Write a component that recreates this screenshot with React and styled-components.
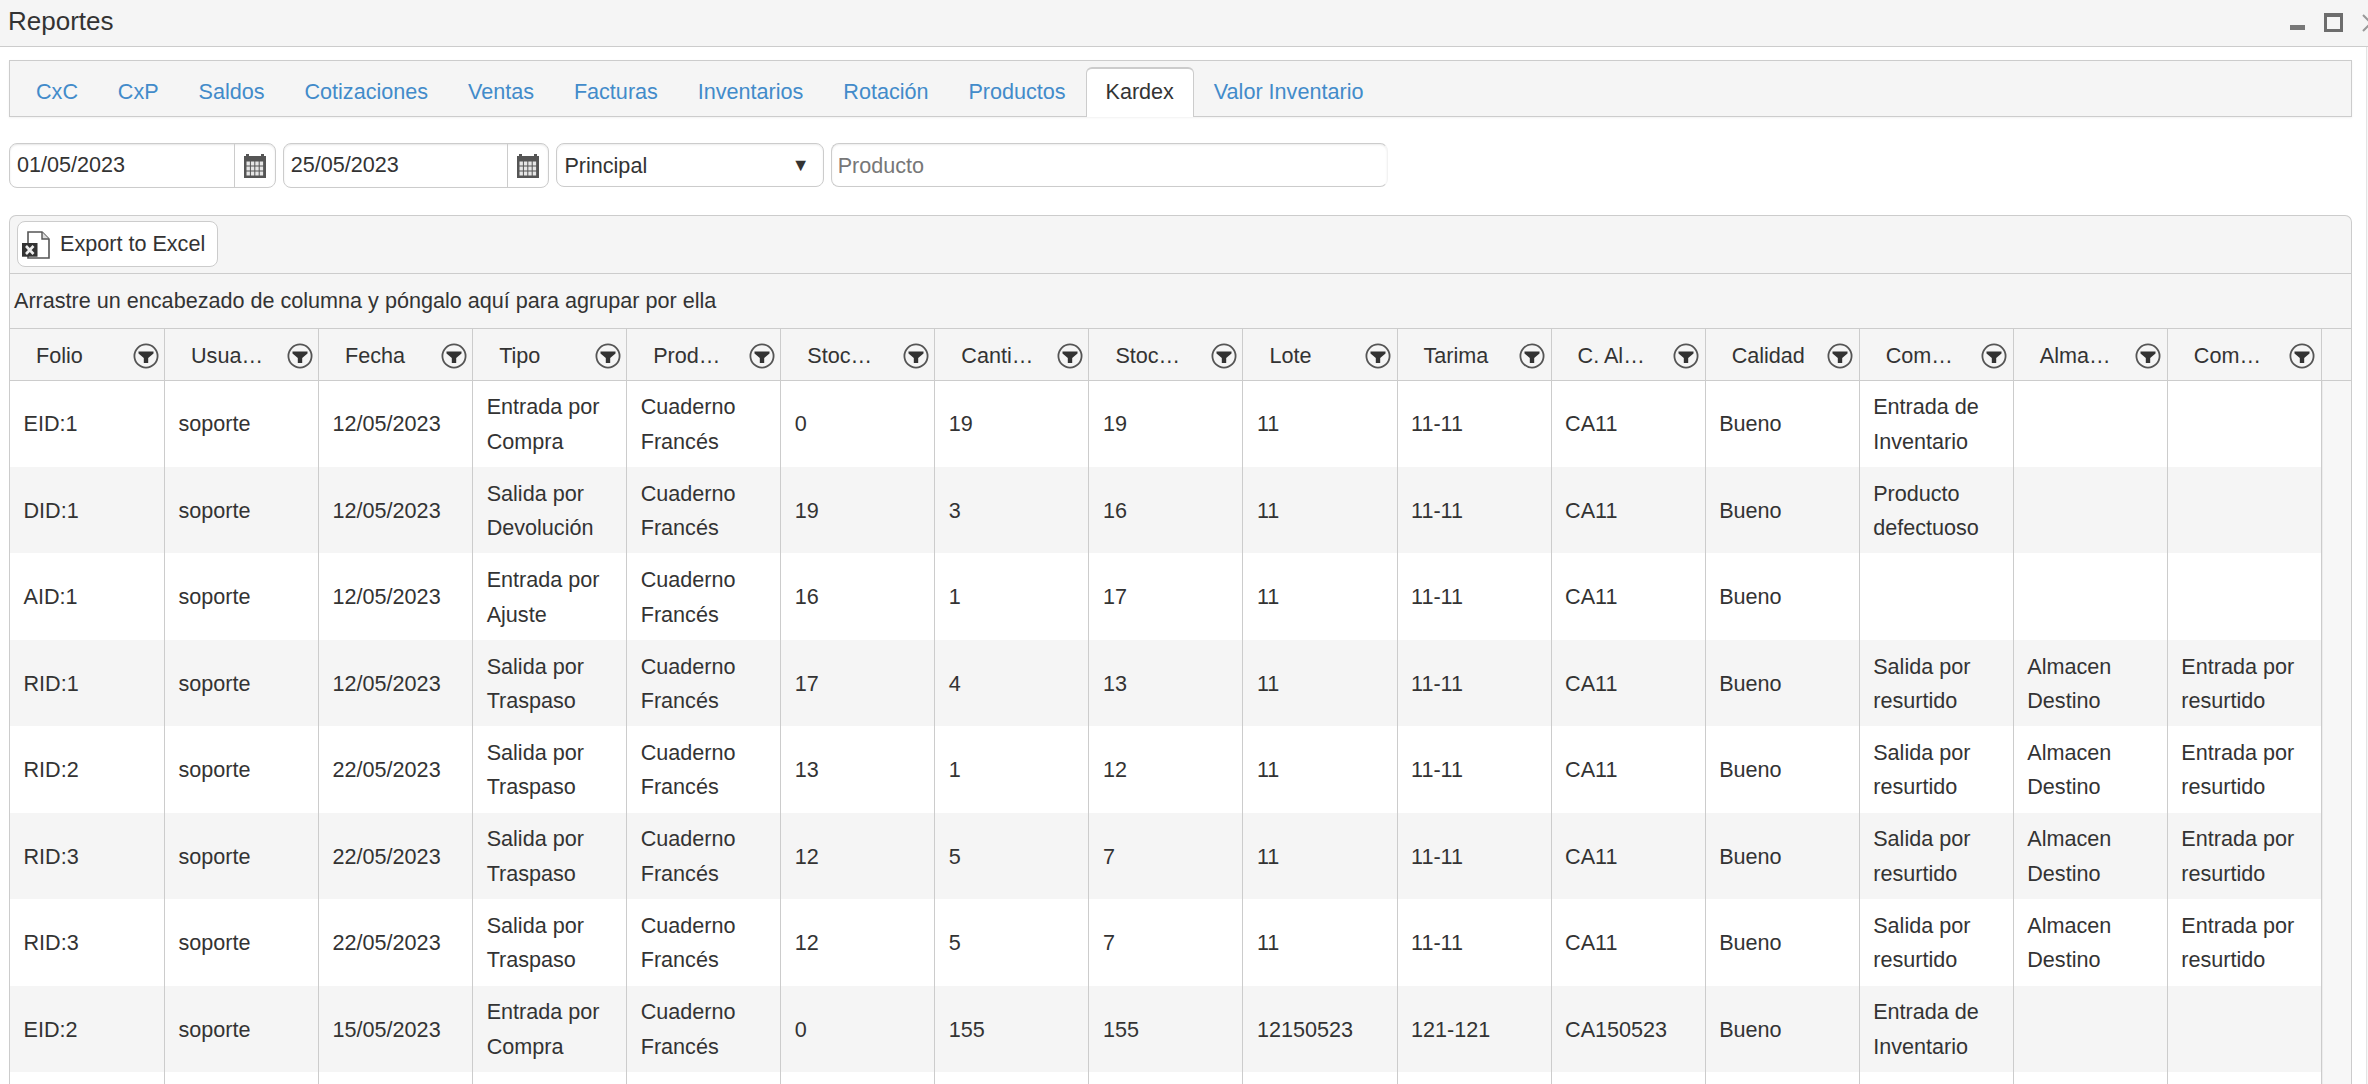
import React from "react";
import styled, { createGlobalStyle } from "styled-components";

const Global = createGlobalStyle`
  html, body { margin: 0; padding: 0; background: #fff; overflow: hidden; }
  body { font-family: "Liberation Sans", Arial, sans-serif; color: #333; }
  * { box-sizing: border-box; }
`;

const Page = styled.div`
  width: 2368px;
  height: 1084px;
  overflow: hidden;
  display: flex;
  flex-direction: column;
`;
const TitleBar = styled.header`
  height: 47px;
  flex: none;
  background: #f5f5f5;
  border-bottom: 1px solid #ccc;
  display: flex;
  align-items: center;
  padding-left: 8px;
`;
const Title = styled.h1`
  margin: 0 0 3px;
  flex: 1;
  font-size: 26px;
  font-weight: 400;
  color: #333;
`;
const WindowControls = styled.div`
  display: flex;
  align-items: flex-start;
  width: 78px;
  height: 46px;
  flex: none;
  overflow: hidden;
`;
const MinimizeIcon = styled.span`
  width: 15px;
  height: 5px;
  flex: none;
  margin-top: 25px;
  background: #777;
`;
const MaximizeIcon = styled.span`
  width: 19px;
  height: 19px;
  flex: none;
  margin: 13px 0 0 19px;
  border: 3.5px solid #6d6d6d;
  border-top-width: 4px;
`;
const CloseIcon = styled.svg`
  width: 14px;
  height: 18px;
  margin: 14px 0 0 19px;
  flex: none;
`;
const Body = styled.div`
  flex: 1;
  min-height: 0;
  display: flex;
`;
const Content = styled.main`
  width: 2367px;
  flex: none;
  padding: 13px 14px 0 9px;
  border-right: 1px solid #e4e4e4;
  display: flex;
  flex-direction: column;
`;
const Rest = styled.div`
  flex: 1;
  background: #f7f7f7;
`;
const TabBar = styled.nav`
  height: 57px;
  flex: none;
  background: #f5f5f5;
  border: 1px solid #ccc;
  box-shadow: 0 1px 2px rgba(0, 0, 0, 0.06);
  display: flex;
  align-items: stretch;
  padding: 6px 0 0 6.05px;
`;
const Tab = styled.a`
  display: flex;
  align-items: center;
  padding: 0 18.95px 2px;
  font-size: 21.6px;
  color: ${(p) => (p.$active ? "#333" : "#428bca")};
  background: ${(p) => (p.$active ? "#fff" : "transparent")};
  border: 1px solid ${(p) => (p.$active ? "#ccc" : "transparent")};
  border-top-width: ${(p) => (p.$active ? "2px" : "1px")};
  border-bottom: 0;
  border-radius: 6px 6px 0 0;
  margin-bottom: -1px;
`;
const Filters = styled.div`
  display: flex;
  align-items: flex-start;
  gap: 7px;
  margin-top: 26px;
  height: 45px;
  flex: none;
`;
const DateGroup = styled.div`
  width: 266.7px;
  height: 45px;
  display: flex;
  border: 1px solid #ccc;
  border-radius: 8px;
  background: #fff;
  box-shadow: inset 0 1px 2px rgba(0, 0, 0, 0.1);
`;
const DateInput = styled.input`
  flex: 1;
  min-width: 0;
  border: 0;
  background: transparent;
  outline: none;
  padding: 0 0 1px 7px;
  font: 400 21.6px "Liberation Sans", Arial, sans-serif;
  color: #333;
`;
const DateAddon = styled.span`
  width: 41px;
  flex: none;
  border-left: 1px solid #ccc;
  display: flex;
  align-items: center;
  justify-content: center;
`;
const SelectBox = styled.div`
  width: 267.3px;
  height: 44px;
  border: 1px solid #ccc;
  border-radius: 8px;
  box-shadow: inset 0 1px 2px rgba(0, 0, 0, 0.08);
  display: flex;
  align-items: center;
  justify-content: space-between;
  padding: 1px 13px 0 7px;
  font-size: 21.6px;
  color: #333;
`;
const SelectArrow = styled.span`
  font-size: 18px;
  color: #333;
`;
const ProductInput = styled.input`
  width: 557.3px;
  height: 44px;
  border: 1px solid #ccc;
  border-right-color: #f2f2f2;
  border-radius: 8px;
  box-shadow: inset 0 1px 2px rgba(0, 0, 0, 0.08);
  outline: none;
  padding: 1px 6px 0;
  font: 400 21.6px "Liberation Sans", Arial, sans-serif;
  color: #333;
  &::placeholder { color: #777; opacity: 1; }
`;
const GridPanel = styled.section`
  margin-top: 27px;
  flex: 1;
  min-height: 0;
  overflow: hidden;
  border: 1px solid #ccc;
  border-bottom: 0;
  border-radius: 7px 7px 0 0;
  background: #f5f5f5;
  display: flex;
  flex-direction: column;
`;
const Toolbar = styled.div`
  height: 58px;
  flex: none;
  padding: 5px 7px 0;
  border-bottom: 1px solid #ccc;
`;
const ExportButton = styled.button`
  width: 201px;
  height: 46px;
  background: #fff;
  border: 1px solid #ccc;
  border-radius: 8px;
  display: flex;
  align-items: center;
  padding: 0 0 0 4px;
  gap: 8px;
  font: 400 21.6px "Liberation Sans", Arial, sans-serif;
  color: #333;
`;
const GroupHint = styled.div`
  height: 55px;
  flex: none;
  border-bottom: 1px solid #ccc;
  display: flex;
  align-items: center;
  padding: 0 0 0 4px;
  font-size: 21.6px;
  color: #333;
`;
const columns = "155px repeat(14, 154.07px) 1fr";
const HeaderRow = styled.div`
  height: 51.5px;
  flex: none;
  display: grid;
  grid-template-columns: ${columns};
  border-bottom: 1px solid #ccc;
`;
const HeaderCell = styled.div`
  display: flex;
  align-items: center;
  justify-content: space-between;
  padding: 3px 5.5px 0 26px;
  border-right: 1px solid #ccc;
  font-size: 21.6px;
  white-space: nowrap;
  color: #333;
`;
const HeaderFill = styled.div``;
const Rows = styled.div`
  flex: 1;
  min-height: 0;
  overflow: hidden;
`;
const Row = styled.div`
  height: 86.45px;
  display: grid;
  grid-template-columns: ${columns};
`;
const Cell = styled.div`
  display: flex;
  align-items: center;
  padding: 2px 12.5px 0 13.5px;
  border-right: 1px solid #ccc;
  background: ${(p) => (p.$alt ? "#f5f5f5" : "#fff")};
  font-size: 21.6px;
  line-height: 34.5px;
  color: #333;
`;
const ScrollTrack = styled.div`
  background: #f7f7f7;
  border-left: 1px solid #ececec;
`;

const CalendarIcon = () => (
  <svg width="22" height="24" viewBox="0 0 22 24">
    <rect x="0" y="2" width="22" height="22" fill="#555" />
    <rect x="2" y="0" width="3" height="4" fill="#555" />
    <rect x="17" y="0" width="3" height="4" fill="#555" />
    {[0, 1, 2].map((r) =>
      [0, 1, 2, 3].map((c) => (
        <rect key={`${r}-${c}`} x={2.5 + c * 4.4} y={7.5 + r * 5} width="3.4" height="4" fill="#e6e6e6" />
      ))
    )}
  </svg>
);
const ExcelIcon = () => (
  <svg width="30" height="30" viewBox="0 0 30 30">
    <path d="M6 14V3H20L27 10V29H6V27" fill="none" stroke="#555" strokeWidth="1.6" />
    <path d="M20 3V10H27" fill="#ddd" stroke="#555" strokeWidth="1.4" />
    <rect x="0" y="14" width="15.5" height="13.7" fill="#333" />
    <path d="M4 17L11.5 25M11.5 17L4 25" stroke="#eee" strokeWidth="2.6" />
  </svg>
);
const FilterIcon = () => (
  <svg width="26" height="26" viewBox="0 0 26 26" style={{ flex: "none" }}>
    <circle cx="13" cy="13" r="11.6" fill="none" stroke="#555" strokeWidth="1.8" />
    <path d="M5.5 8.5H20.5V10.5L15.2 15V20H10.8V15L5.5 10.5Z" fill="#333" />
  </svg>
);

const tabs = ["CxC", "CxP", "Saldos", "Cotizaciones", "Ventas", "Facturas", "Inventarios", "Rotación", "Productos", "Kardex", "Valor Inventario"];
const headers = ["Folio", "Usua…", "Fecha", "Tipo", "Prod…", "Stoc…", "Canti…", "Stoc…", "Lote", "Tarima", "C. Al…", "Calidad", "Com…", "Alma…", "Com…"];
const P = "Cuaderno Francés";
const res = ["Salida por resurtido", "Almacen Destino", "Entrada por resurtido"];
const data = [
  ["EID:1", "soporte", "12/05/2023", "Entrada por Compra", P, "0", "19", "19", "11", "11-11", "CA11", "Bueno", "Entrada de Inventario", "", ""],
  ["DID:1", "soporte", "12/05/2023", "Salida por Devolución", P, "19", "3", "16", "11", "11-11", "CA11", "Bueno", "Producto defectuoso", "", ""],
  ["AID:1", "soporte", "12/05/2023", "Entrada por Ajuste", P, "16", "1", "17", "11", "11-11", "CA11", "Bueno", "", "", ""],
  ["RID:1", "soporte", "12/05/2023", "Salida por Traspaso", P, "17", "4", "13", "11", "11-11", "CA11", "Bueno", ...res],
  ["RID:2", "soporte", "22/05/2023", "Salida por Traspaso", P, "13", "1", "12", "11", "11-11", "CA11", "Bueno", ...res],
  ["RID:3", "soporte", "22/05/2023", "Salida por Traspaso", P, "12", "5", "7", "11", "11-11", "CA11", "Bueno", ...res],
  ["RID:3", "soporte", "22/05/2023", "Salida por Traspaso", P, "12", "5", "7", "11", "11-11", "CA11", "Bueno", ...res],
  ["EID:2", "soporte", "15/05/2023", "Entrada por Compra", P, "0", "155", "155", "12150523", "121-121", "CA150523", "Bueno", "Entrada de Inventario", "", ""],
  ["", "", "", "", "", "", "", "", "", "", "", "", "", "", ""],
];

export default function App() {
  return (
    <Page>
      <Global />
      <TitleBar>
        <Title>Reportes</Title>
        <WindowControls>
          <MinimizeIcon />
          <MaximizeIcon />
          <CloseIcon viewBox="0 0 14 18">
            <path d="M1 1L9 9L1 17" fill="none" stroke="#999" strokeWidth="2" />
          </CloseIcon>
        </WindowControls>
      </TitleBar>
      <Body>
        <Content>
          <TabBar>
            {tabs.map((t) => (
              <Tab key={t} $active={t === "Kardex"}>{t}</Tab>
            ))}
          </TabBar>
          <Filters>
            <DateGroup>
              <DateInput defaultValue="01/05/2023" />
              <DateAddon><CalendarIcon /></DateAddon>
            </DateGroup>
            <DateGroup>
              <DateInput defaultValue="25/05/2023" />
              <DateAddon><CalendarIcon /></DateAddon>
            </DateGroup>
            <SelectBox>
              Principal
              <SelectArrow>▼</SelectArrow>
            </SelectBox>
            <ProductInput placeholder="Producto" />
          </Filters>
          <GridPanel>
            <Toolbar>
              <ExportButton><ExcelIcon />Export to Excel</ExportButton>
            </Toolbar>
            <GroupHint>Arrastre un encabezado de columna y póngalo aquí para agrupar por ella</GroupHint>
            <HeaderRow>
              {headers.map((h, i) => (
                <HeaderCell key={i}>{h}<FilterIcon /></HeaderCell>
              ))}
              <HeaderFill />
            </HeaderRow>
            <Rows>
              {data.map((row, r) => (
                <Row key={r}>
                  {row.map((v, c) => (
                    <Cell key={c} $alt={r % 2 === 1}>{v}</Cell>
                  ))}
                  <ScrollTrack />
                </Row>
              ))}
            </Rows>
          </GridPanel>
        </Content>
        <Rest />
      </Body>
    </Page>
  );
}
